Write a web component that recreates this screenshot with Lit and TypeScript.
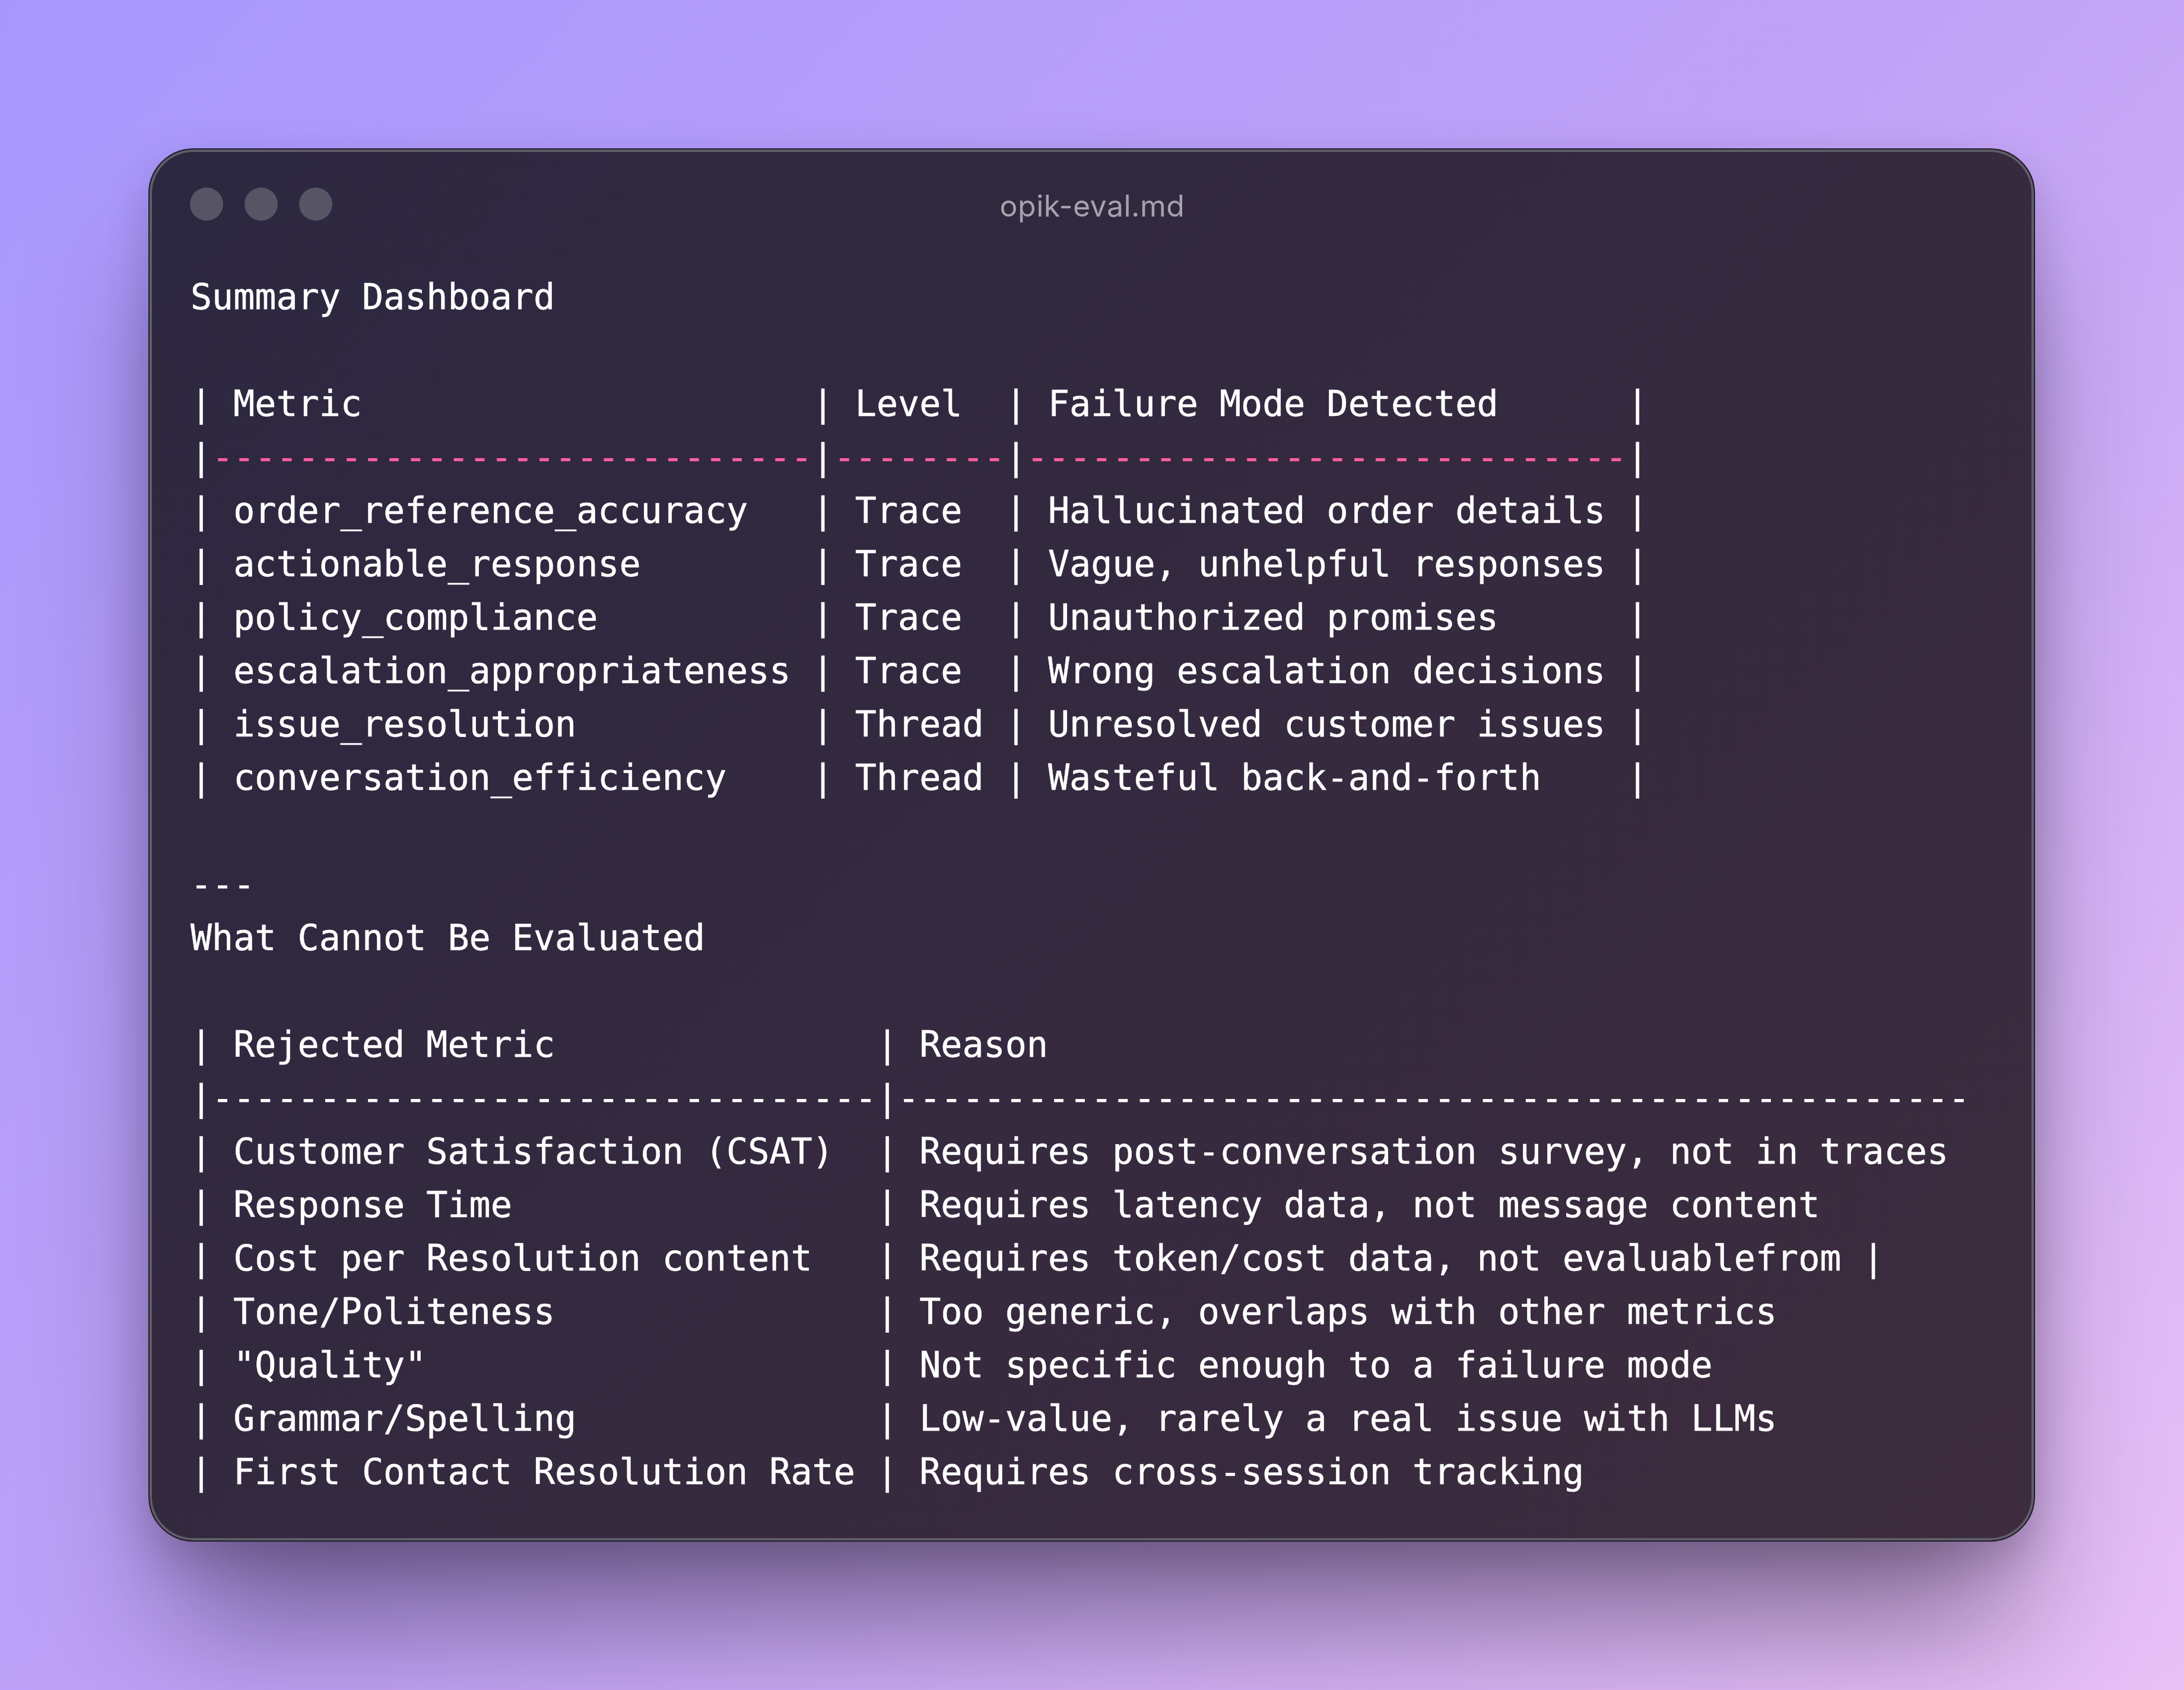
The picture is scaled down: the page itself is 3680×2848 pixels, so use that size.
import { LitElement, html, css } from "lit";
import { customElement } from "lit/decorators.js";

const lines: string[] = [
"Summary Dashboard","",
"| Metric                     | Level  | Failure Mode Detected      |",
"|----------------------------|--------|----------------------------|",
"| order_reference_accuracy   | Trace  | Hallucinated order details |",
"| actionable_response        | Trace  | Vague, unhelpful responses |",
"| policy_compliance          | Trace  | Unauthorized promises      |",
"| escalation_appropriateness | Trace  | Wrong escalation decisions |",
"| issue_resolution           | Thread | Unresolved customer issues |",
"| conversation_efficiency    | Thread | Wasteful back-and-forth    |",
"","---","What Cannot Be Evaluated","",
"| Rejected Metric               | Reason",
"|-------------------------------|--------------------------------------------------",
"| Customer Satisfaction (CSAT)  | Requires post-conversation survey, not in traces",
"| Response Time                 | Requires latency data, not message content",
"| Cost per Resolution content   | Requires token/cost data, not evaluablefrom |",
"| Tone/Politeness               | Too generic, overlaps with other metrics",
"| \"Quality\"                     | Not specific enough to a failure mode",
"| Grammar/Spelling              | Low-value, rarely a real issue with LLMs",
"| First Contact Resolution Rate | Requires cross-session tracking",
];

@customElement("app-root")
export class AppRoot extends LitElement {
  static styles = css`
    :host { display: block; width: 3680px; height: 2848px; overflow: hidden; }
    .bg { width: 100%; height: 100%; box-sizing: border-box; padding: 250px 251px 0 250px;
      background: linear-gradient(135deg, #a898fe 0%, #c0a2f7 50%, #e8c0f6 100%); }
    .win { height: 2348px; box-sizing: border-box; border-radius: 76px; border: 2px solid #211e2a;
      background: linear-gradient(135deg, #2c2740 0%, #3d2c3e 100%);
      box-shadow: inset 0 0 0 4px #5f5d6a, 0 170px 220px -40px rgba(35,25,45,.5), 0 30px 70px rgba(35,25,45,.2);
      padding: 64px 66px 0 68px; font-family: "DejaVu Sans Mono", monospace; }
    .bar { position: relative; display: flex; gap: 36px; height: 56px; align-items: center; }
    .dot { width: 56px; height: 56px; border-radius: 50%; background: #575465; }
    .title { position: absolute; left: 0; right: 0; top: 1px; text-align: center;
      font: 50px Inter, sans-serif; letter-spacing: 0.5px; color: #a5a2ac; }
    pre { margin: 83px 0 0 1px; font: 60px/90px "DejaVu Sans Mono", monospace; color: #ffffff;
      -webkit-text-stroke: 0.5px currentColor; }
    .pink { color: #fb5f9e; }
  `;
  render() {
    return html`<div class="bg"><div class="win">
      <div class="bar"><span class="dot"></span><span class="dot"></span><span class="dot"></span><span class="title">opik-eval.md</span></div>
      <pre>${lines.map((l, i) => i === 3
        ? html`<div>|<span class="pink">----------------------------</span>|<span class="pink">--------</span>|<span class="pink">----------------------------</span>|</div>`
        : html`<div>${l || " "}</div>`)}</pre>
    </div></div>`;
  }
}
